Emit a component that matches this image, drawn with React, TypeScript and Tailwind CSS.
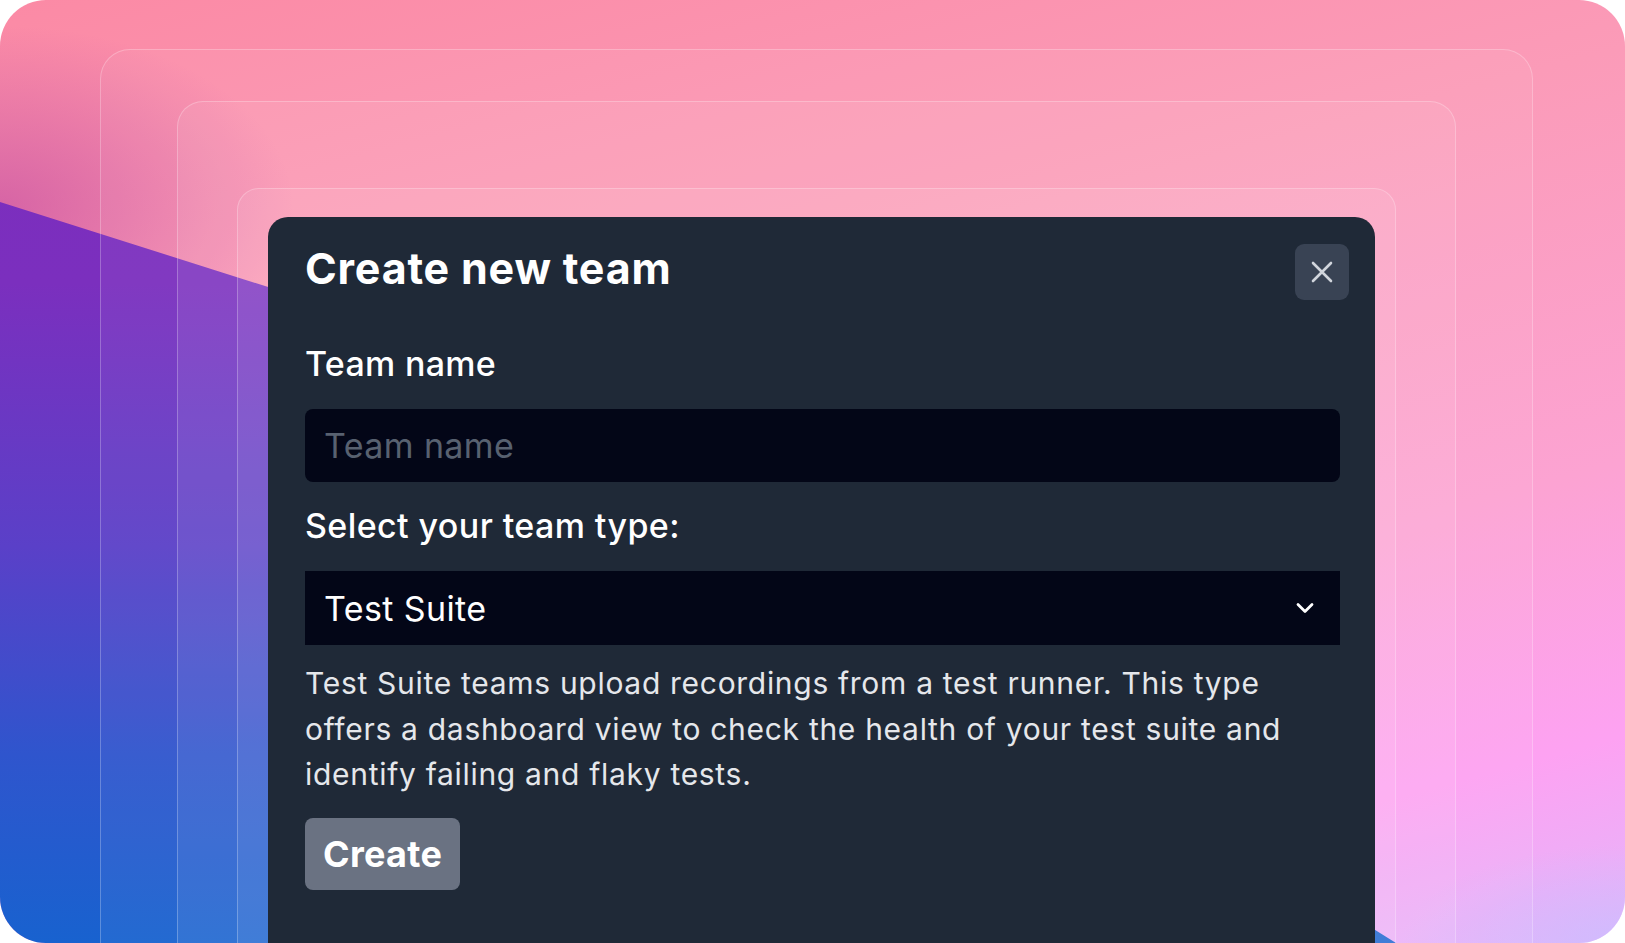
import { useState } from 'react';

const TEAM_TYPES = ['Test Suite', 'Standard'];

function CloseIcon() {
  return (
    <svg width="22" height="22" viewBox="0 0 22 22" fill="none" stroke="currentColor" strokeWidth="2.6" strokeLinecap="round">
      <path d="M2 2L20 20M20 2L2 20" />
    </svg>
  );
}

function Chevron() {
  return (
    <svg width="18" height="12" viewBox="0 0 18 12" fill="none" stroke="currentColor" strokeWidth="2.8" strokeLinecap="round" strokeLinejoin="round">
      <path d="M2 2.5L9 9.5L16 2.5" />
    </svg>
  );
}

function Backdrop() {
  // decorative mesh-ish gradient behind the frames
  return (
    <div className="absolute inset-0 pointer-events-none">
      <div className="absolute inset-0 bg-[linear-gradient(165deg,#fb8aa5_0%,#fb9bb8_35%,#fca3d2_65%,#fda2f2_85%,#e2b6fb_100%)]" />
      <div className="absolute inset-0 bg-[radial-gradient(ellipse_420px_260px_at_0%_22%,rgba(190,70,160,0.6),transparent_70%)]" />
      <div className="absolute inset-0 bg-[radial-gradient(ellipse_320px_140px_at_100%_100%,rgba(200,190,255,0.7),transparent_70%)]" />
      <div className="absolute inset-0 [clip-path:polygon(0px_202px,700px_424px,1300px_840px,1372px_928px,1396px_943px,0px_943px)] bg-[linear-gradient(180deg,#7c2dbd_0%,#7b2fbe_30%,#5a40c8_58%,#2f55cd_80%,#1862cf_100%)]" />
    </div>
  );
}

export default function App() {
  const [name, setName] = useState('');
  const [type, setType] = useState(TEAM_TYPES[0]);

  return (
    <div className="w-[1625px] h-[943px] bg-white font-['Inter','Liberation_Sans',sans-serif]">
      <div className="relative h-full rounded-[46px] overflow-hidden flex flex-col pl-[100px] pr-[92px] pt-[49px]">
        <Backdrop />

        <div className="relative flex-1 flex flex-col rounded-t-[30px] border border-b-0 border-white/25 bg-white/[0.05] pl-[76px] pr-[76px] pt-[51px]">
          <div className="flex-1 flex flex-col rounded-t-[26px] border border-b-0 border-white/25 bg-white/[0.07] pl-[59px] pr-[59px] pt-[86px]">
            <div className="flex-1 flex flex-col rounded-t-[22px] border border-b-0 border-white/25 bg-white/[0.07] pl-[30px] pr-[20px] pt-[28px]">
              <div className="flex-1 rounded-t-[20px] bg-[#1f2937] pl-[37px] pr-[35px] pt-[26px]">
                <div className="flex items-start justify-between -mr-[9px]">
                  <h2 className="text-[43px] leading-[50px] font-bold tracking-[0.8px] text-white">Create new team</h2>
                  <button className="mt-[1px] w-[54px] h-[56px] rounded-[9px] bg-[#394354] text-gray-300 flex items-center justify-center">
                    <CloseIcon />
                  </button>
                </div>

                <label className="block mt-[42px] text-[34px] leading-[44px] font-medium tracking-[0.3px] text-white">Team name</label>
                <input
                  value={name}
                  onChange={(e) => setName(e.target.value)}
                  placeholder="Team name"
                  className="mt-[23px] w-full h-[73px] rounded-[8px] bg-[#030617] px-[19px] text-[34px] tracking-[0.4px] text-white placeholder:text-[#586170] outline-none"
                />

                <label className="block mt-[22px] text-[34px] leading-[44px] font-medium tracking-[0.4px] text-white">Select your team type:</label>
                <div className="mt-[23px] h-[74px] bg-[#030617] flex items-center justify-between pl-[19px] pr-[26px] text-white">
                  <span className="text-[34px] tracking-[0.4px]">{type}</span>
                  <button onClick={() => setType(type === TEAM_TYPES[0] ? TEAM_TYPES[1] : TEAM_TYPES[0])}>
                    <Chevron />
                  </button>
                </div>

                <p className="mt-[16px] max-w-[1000px] text-[30px] leading-[45.5px] tracking-[0.7px] text-gray-200">
                  Test Suite teams upload recordings from a test runner. This type offers a dashboard view to check the health of your test suite and identify failing and flaky tests.
                </p>

                <button className="mt-[20px] h-[72px] px-[18px] rounded-[8px] bg-gray-500 text-white text-[36px] font-bold tracking-[0.3px]">
                  Create
                </button>
              </div>
            </div>
          </div>
        </div>
      </div>
    </div>
  );
}
